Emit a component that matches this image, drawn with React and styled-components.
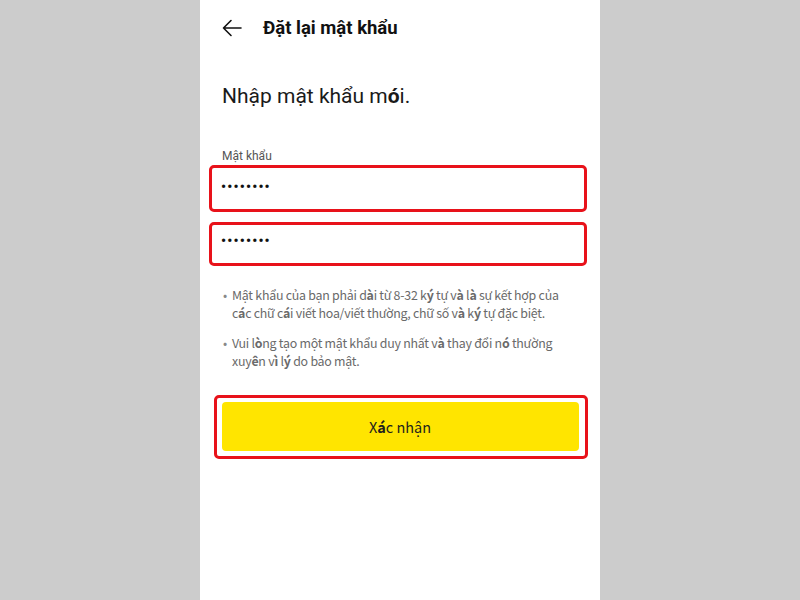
import styled, { createGlobalStyle } from "styled-components";

const Global = createGlobalStyle`
  body {
    margin: 0;
    background: #cccccc;
    font-family: "Noto Sans CJK KR", "Noto Sans", sans-serif;
  }
`;

const Page = styled.div`
  display: flex;
  justify-content: center;
  min-height: 600px;
`;

const Phone = styled.div`
  width: 400px;
  min-height: 600px;
  background: #ffffff;
  padding: 0 22px;
  box-sizing: border-box;
  display: flex;
  flex-direction: column;
`;

const Header = styled.div`
  height: 56px;
  display: flex;
  align-items: center;
  gap: 21px;
`;

const BackIcon = styled.svg`
  width: 20px;
  height: 20px;
  flex-shrink: 0;
`;

const Title = styled.h1`
  margin: 0;
  font-family: Roboto, sans-serif;
  font-size: 18.5px;
  font-weight: 700;
  color: #111;
`;

const Heading = styled.h2`
  margin: 26px 0 0;
  font-family: Roboto, sans-serif;
  font-size: 21px;
  font-weight: 400;
  color: #1a1a1a;
  line-height: 28px;
`;

const Accent = styled.span`
  font-weight: 700;
`;

// keeps a word with a bold accent letter on one line
const Word = styled.span`
  white-space: nowrap;
`;

const Label = styled.div`
  margin-top: 38px;
  font-family: Roboto, sans-serif;
  font-size: 12px;
  color: #555;
  line-height: 16px;
`;

const Marked = styled.div`
  margin: ${(p) => p.$top}px -9px 0 -13px;
  height: ${(p) => p.$h}px;
  border: 3.5px solid #e8121a;
  border-radius: 5px;
  box-sizing: border-box;
  padding: ${(p) => p.$pad}px 0 0 9px;
`;

const Dots = styled.div`
  font-family: Roboto, sans-serif;
  font-size: 14px;
  letter-spacing: 1.2px;
  color: #111;
  line-height: 14px;
  font-weight: 700;
`;

const Notes = styled.ul`
  list-style: none;
  margin: 20px 0 0;
  padding: 0;
  display: flex;
  flex-direction: column;
  gap: 12px;
`;

const Note = styled.li`
  position: relative;
  padding-left: 10px;
  font-size: 12.4px;
  letter-spacing: -0.25px;
  line-height: 18px;
  color: #6a6a6a;
  &::before {
    content: "•";
    position: absolute;
    left: 1px;
    top: 0;
    color: #888;
  }
  ${Accent} {
    display: inline-block;
    line-height: 1;
  }
`;

const ButtonFrame = styled.div`
  margin: 25px -10px 0 -8px;
  border: 3.5px solid #e8121a;
  border-radius: 5px;
  padding: 3.5px 6.5px 5.5px 4.5px;
`;

const Button = styled.button`
  width: 100%;
  height: 49px;
  border: none;
  border-radius: 4px;
  background: #ffe500;
  font-family: "Noto Sans CJK KR", "Noto Sans", sans-serif;
  font-size: 14.5px;
  color: #1e1e1e;
  cursor: pointer;
`;

const W = ({ a, b, c }) => (
  <Word>
    {a}
    <Accent>{b}</Accent>
    {c}
  </Word>
);

export default function App() {
  return (
    <Page>
      <Global />
      <Phone>
        <Header>
          <BackIcon viewBox="0 0 20 20" fill="none" stroke="#111" strokeWidth="1.6" strokeLinecap="round" strokeLinejoin="round">
            <path d="M19 10H1.5M9 2.5L1.5 10L9 17.5" />
          </BackIcon>
          <Title>Đặt lại mật khẩu</Title>
        </Header>
        <Heading>
          Nhập mật khẩu m<Accent>ó</Accent>i.
        </Heading>
        <Label>Mật khẩu</Label>
        <Marked $top={1} $h={47} $pad={12}>
          <Dots>••••••••</Dots>
        </Marked>
        <Marked $top={10} $h={44} $pad={9}>
          <Dots>••••••••</Dots>
        </Marked>
        <Notes>
          <Note>
            Mật khẩu của bạn phải <W a="d" b="à" c="i" /> từ 8-32 <W a="k" b="ý" /> tự <W a="v" b="à" />{" "}
            <W a="l" b="à" /> sự kết hợp của <W a="c" b="á" c="c" /> chữ <W a="c" b="á" c="i" /> viết
            hoa/viết thường, chữ số <W a="v" b="à" /> <W a="k" b="ý" /> tự đặc biệt.
          </Note>
          <Note>
            Vui <W a="l" b="ò" c="ng" /> tạo một mật khẩu duy nhất <W a="v" b="à" /> thay đổi{" "}
            <W a="n" b="ó" /> thường <W a="xuy" b="ê" c="n" /> <W a="v" b="ì" /> <W a="l" b="ý" /> do
            bảo mật.
          </Note>
        </Notes>
        <ButtonFrame>
          <Button>
            X<Accent>á</Accent>c nhận
          </Button>
        </ButtonFrame>
      </Phone>
    </Page>
  );
}
